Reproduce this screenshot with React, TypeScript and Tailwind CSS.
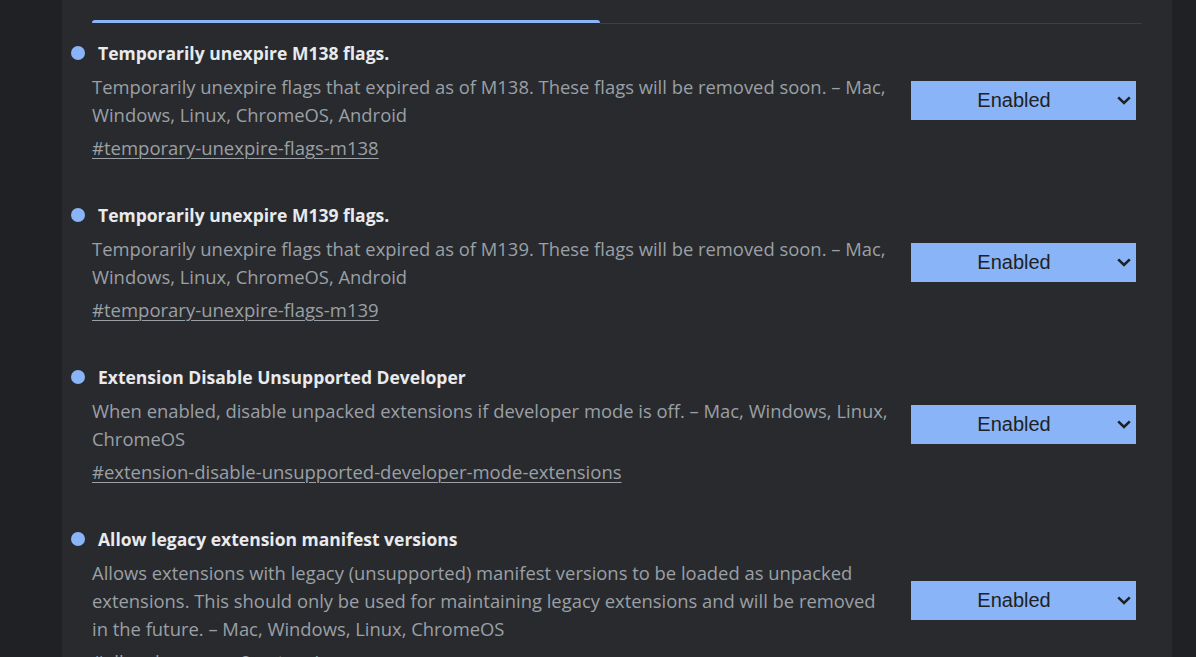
const flags = [
  {
    title: "Temporarily unexpire M138 flags.",
    desc: [
      "Temporarily unexpire flags that expired as of M138. These flags will be removed soon. – Mac,",
      "Windows, Linux, ChromeOS, Android",
    ],
    link: "#temporary-unexpire-flags-m138",
  },
  {
    title: "Temporarily unexpire M139 flags.",
    desc: [
      "Temporarily unexpire flags that expired as of M139. These flags will be removed soon. – Mac,",
      "Windows, Linux, ChromeOS, Android",
    ],
    link: "#temporary-unexpire-flags-m139",
  },
  {
    title: "Extension Disable Unsupported Developer",
    desc: [
      "When enabled, disable unpacked extensions if developer mode is off. – Mac, Windows, Linux,",
      "ChromeOS",
    ],
    link: "#extension-disable-unsupported-developer-mode-extensions",
  },
  {
    title: "Allow legacy extension manifest versions",
    desc: [
      "Allows extensions with legacy (unsupported) manifest versions to be loaded as unpacked",
      "extensions. This should only be used for maintaining legacy extensions and will be removed",
      "in the future. – Mac, Windows, Linux, ChromeOS",
    ],
    link: "#allow-legacy-mv2-extensions",
  },
];

function Select() {
  return (
    <div className="flex items-center w-[225px] h-[39px] ml-[14px] mb-[2px] shrink-0 bg-[#8ab4f8] text-[#202124] font-['Liberation_Sans',Arial,sans-serif] text-[20px]">
      <span className="flex-1 text-center">Enabled</span>
      <svg width="14" height="9" viewBox="0 0 14 9" className="mr-[5px]" fill="none">
        <path d="M1.2 1.4 L7 7 L12.8 1.4" stroke="#202124" strokeWidth="2.6" />
      </svg>
    </div>
  );
}

function Flag({ flag }: { flag: (typeof flags)[number] }) {
  return (
    <div className="pt-[17px] pb-[24px] pr-[6px]">
      <div className="flex items-center h-6">
        <span className="w-[14px] h-[14px] rounded-full bg-[#8ab4f8] ml-[-21px] mr-[13px] shrink-0" />
        <h2 className="text-[17.5px] font-bold text-[#e8eaed] whitespace-nowrap">{flag.title}</h2>
      </div>
      <div className="flex items-center mt-2">
        <p className="flex-1 text-[18.4px] leading-[28px] text-[#9aa0a6]">
          {flag.desc.map((line) => (
            <span key={line} className="block whitespace-nowrap">
              {line}
            </span>
          ))}
        </p>
        <Select />
      </div>
      <a className="block mt-[5px] text-[18.5px] leading-[28px] text-[#9aa0a6] underline underline-offset-[3px] decoration-1 w-fit">
        {flag.link}
      </a>
    </div>
  );
}

export default function App() {
  return (
    <div className="flex h-[657px] overflow-hidden bg-[#202124] font-['Open_Sans',sans-serif]">
      <div className="w-[62px] shrink-0" />
      <div className="w-[1110px] shrink-0 bg-[#292a2d] px-[30px]">
        <div className="flex items-end h-6">
          <div className="w-[508px] h-[3px] mb-[1px] bg-[#8ab4f8] rounded-t-sm" />
          <div className="flex-1 h-px bg-[#3c4043]" />
        </div>
        {flags.map((f) => (
          <Flag key={f.link} flag={f} />
        ))}
      </div>
    </div>
  );
}
